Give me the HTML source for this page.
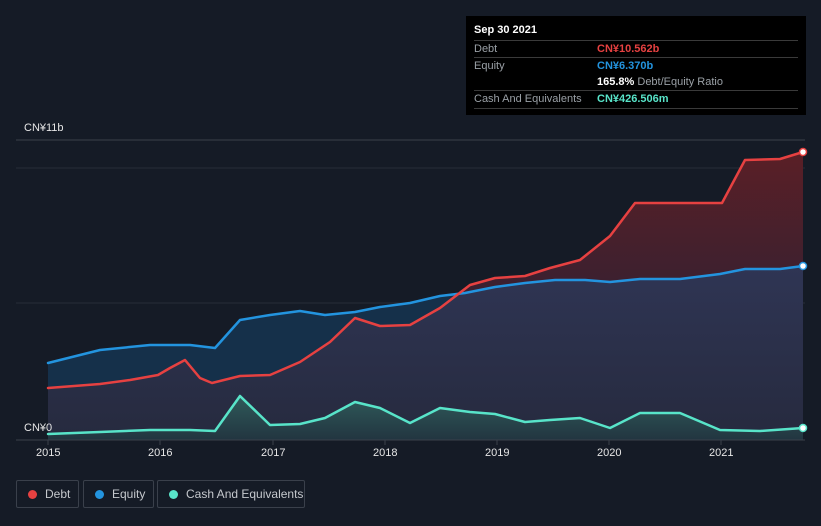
<!DOCTYPE html>
<html><head><meta charset="utf-8"><style>
body{margin:0;background:#151b26;width:821px;height:526px;overflow:hidden;font-family:"Liberation Sans",sans-serif;position:relative}
.tt{position:absolute;left:466px;top:16px;width:340px;height:99px;background:#000;color:#fff;font-size:11px}
.tt .r{position:absolute;left:8px;right:8px;border-top:1px solid #3a3a3a;height:17px;line-height:17px}
.tt .l{color:#9aa0a6;position:absolute;left:0}
.tt .v{position:absolute;left:123px;font-weight:bold}
.lg{position:absolute;top:480px;height:26px;border:1px solid #3a404b;border-radius:2px;color:#c5c8cd;font-size:12px;line-height:26px}
.lg i{position:absolute;left:11px;top:9px;width:9px;height:9px;border-radius:50%}
.ax{position:absolute;top:447px;color:#e6e6e6;font-size:11px}
</style></head><body>
<svg width="821" height="526" style="position:absolute;left:0;top:0">
<defs>
<linearGradient id="gd" x1="0" y1="0" x2="0" y2="1"><stop offset="0" stop-color="#5a1f26"/><stop offset="1" stop-color="#3a2030"/></linearGradient>
<linearGradient id="gu" x1="0" y1="0" x2="0" y2="1"><stop offset="0" stop-color="#2f3554"/><stop offset="1" stop-color="#262a3e"/></linearGradient>
<linearGradient id="gc" x1="0" y1="0" x2="0" y2="1"><stop offset="0" stop-color="#2f5a5a"/><stop offset="1" stop-color="#223540"/></linearGradient>
</defs>
<line x1="16" y1="140" x2="805" y2="140" stroke="#3a404b"/>
<line x1="16" y1="168" x2="805" y2="168" stroke="#262c38"/>
<line x1="16" y1="303" x2="805" y2="303" stroke="#262c38"/>
<polygon fill="url(#gu)" points="48,363 100,350 150,345 190,345 215,348 240,320 270,315 300,311 325,315 355,312 380,307 410,303 440,296 465,293 495,287 525,283 555,280 585,280 610,282 640,279 680,279 720,274 745,269 780,269 803,266 803,440 48,440"/>
<polygon fill="#15304a" points="48,363 100,350 150,345 190,345 215,348 240,320 270,315 300,311 325,315 355,312 380,307 410,303 440,296 462,292 440,308 410,325 380,326 355,318 330,342 300,362 270,375 240,376 212,383 200,378 185,360 170,368 158,375 130,380 100,384 48,388"/>
<polygon fill="url(#gd)" points="462,292 470,285 495,278 525,276 550,268 580,260 610,236 635,203 680,203 722,203 745,160 780,159 803,152 803,266 780,269 745,269 720,274 680,279 640,279 610,282 585,280 555,280 525,283 495,287 465,293"/>
<polygon fill="url(#gc)" points="48,434 100,432 150,430 190,430 215,431 240,396 270,425 300,424 325,418 355,402 380,408 410,423 440,408 470,412 495,414 525,422 550,420 580,418 610,428 640,413 680,413 720,430 760,431 803,428 803,440 48,440"/>
<g fill="none" stroke-width="2.5" stroke-linejoin="round" stroke-linecap="round">
<polyline stroke="#2394df" points="48,363 100,350 150,345 190,345 215,348 240,320 270,315 300,311 325,315 355,312 380,307 410,303 440,296 465,293 495,287 525,283 555,280 585,280 610,282 640,279 680,279 720,274 745,269 780,269 803,266"/>
<polyline stroke="#e64141" points="48,388 100,384 130,380 158,375 170,368 185,360 200,378 212,383 240,376 270,375 300,362 330,342 355,318 380,326 410,325 440,308 470,285 495,278 525,276 550,268 580,260 610,236 635,203 680,203 722,203 745,160 780,159 803,152"/>
<polyline stroke="#58e4c9" points="48,434 100,432 150,430 190,430 215,431 240,396 270,425 300,424 325,418 355,402 380,408 410,423 440,408 470,412 495,414 525,422 550,420 580,418 610,428 640,413 680,413 720,430 760,431 803,428"/>
</g>
<circle cx="803" cy="152" r="3.5" fill="#fff" stroke="#e64141" stroke-width="1.5"/>
<circle cx="803" cy="266" r="3.5" fill="#fff" stroke="#2394df" stroke-width="1.5"/>
<circle cx="803" cy="428" r="3.5" fill="#fff" stroke="#58e4c9" stroke-width="1.5"/>
<line x1="16" y1="440" x2="805" y2="440" stroke="#3a404b"/>
<g stroke="#3a404b"><line x1="48" y1="440" x2="48" y2="445"/><line x1="160" y1="440" x2="160" y2="445"/><line x1="273" y1="440" x2="273" y2="445"/><line x1="385" y1="440" x2="385" y2="445"/><line x1="497" y1="440" x2="497" y2="445"/><line x1="609" y1="440" x2="609" y2="445"/><line x1="721" y1="440" x2="721" y2="445"/></g>
</svg>
<div style="position:absolute;left:24px;top:122px;color:#e6e6e6;font-size:11px">CN¥11b</div>
<div style="position:absolute;left:24px;top:422px;color:#e6e6e6;font-size:11px">CN¥0</div>
<div class="ax" style="left:36px">2015</div><div class="ax" style="left:148px">2016</div><div class="ax" style="left:261px">2017</div><div class="ax" style="left:373px">2018</div><div class="ax" style="left:485px">2019</div><div class="ax" style="left:597px">2020</div><div class="ax" style="left:709px">2021</div>
<div class="tt">
<div style="position:absolute;left:8px;top:8px;font-weight:bold;font-size:11px">Sep 30 2021</div>
<div class="r" style="top:24px"><span class="l">Debt</span><span class="v" style="color:#e64141">CN¥10.562b</span></div>
<div class="r" style="top:41px"><span class="l">Equity</span><span class="v" style="color:#2394df">CN¥6.370b</span></div>
<div class="r" style="top:58px;border-top:none"><span class="v" style="color:#fff">165.8% <span style="font-weight:normal;color:#9aa0a6">Debt/Equity Ratio</span></span></div>
<div class="r" style="top:74px;border-bottom:1px solid #3a3a3a"><span class="l">Cash And Equivalents</span><span class="v" style="color:#58e4c9">CN¥426.506m</span></div>
</div>
<div class="lg" style="left:16px;width:61px"><i style="background:#e64141"></i><span style="position:absolute;left:28px">Debt</span></div>
<div class="lg" style="left:83px;width:69px"><i style="background:#2394df"></i><span style="position:absolute;left:28px">Equity</span></div>
<div class="lg" style="left:157px;width:146px"><i style="background:#58e4c9"></i><span style="position:absolute;left:28px">Cash And Equivalents</span></div>
</body></html>
